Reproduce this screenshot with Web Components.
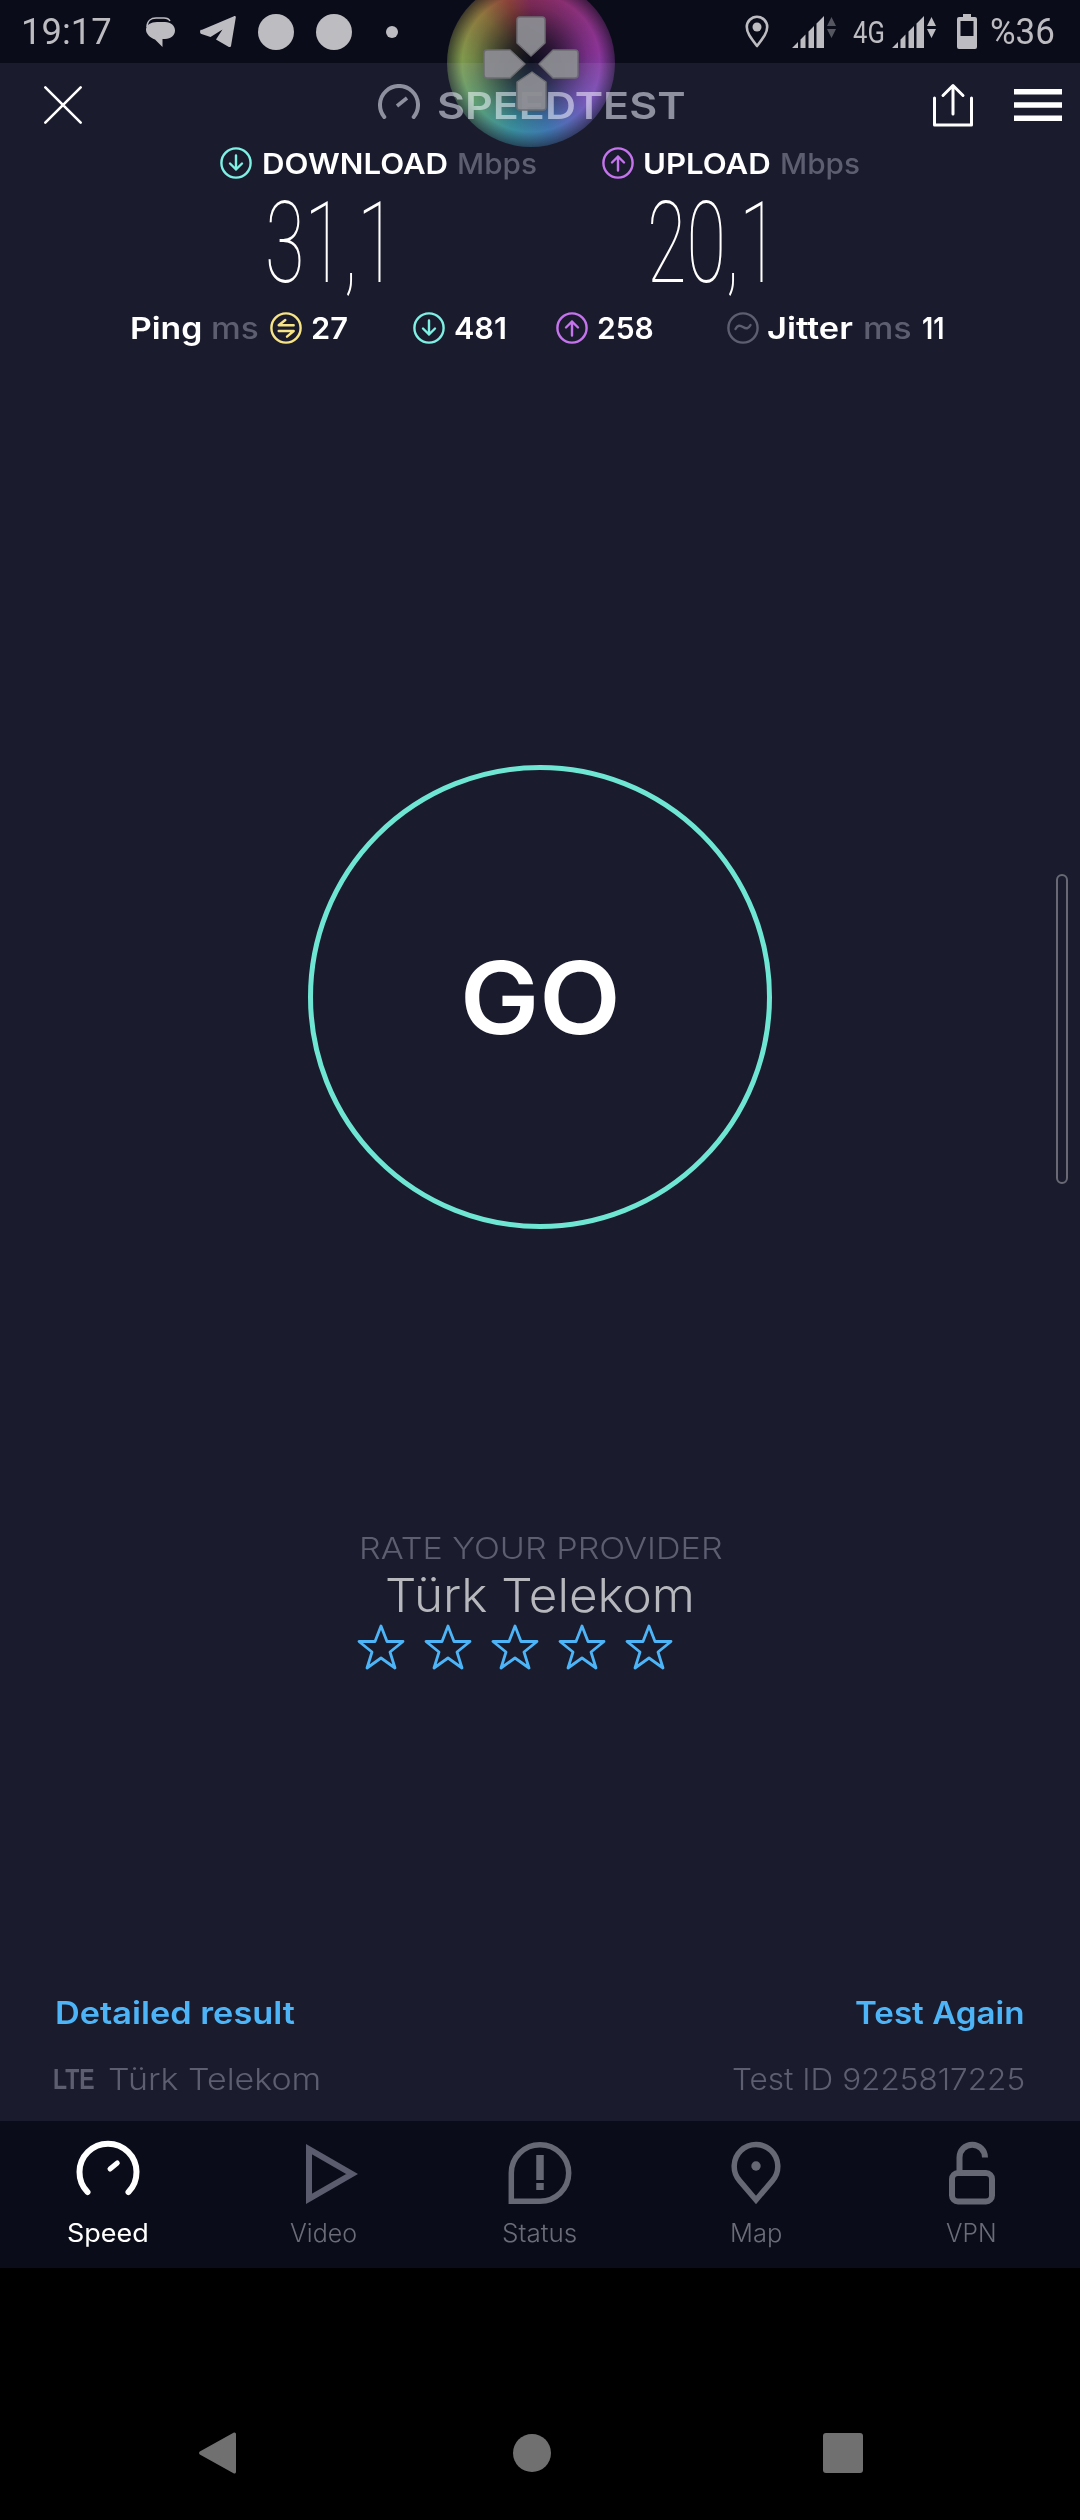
<!DOCTYPE html>
<html>
<head>
<meta charset="utf-8">
<title>Speedtest</title>
<style>
  html, body { margin: 0; padding: 0; background: #000; }
  body { width: 1080px; height: 2520px; overflow: hidden; font-family: Inter, "Liberation Sans", sans-serif; }
  speed-app { display: flex; }
</style>
</head>
<body>
<speed-app>
  <status-bar slot="status"></status-bar>
  <top-bar slot="top"></top-bar>
  <result-summary slot="top"></result-summary>
  <go-button slot="main"></go-button>
  <rate-provider slot="main"></rate-provider>
  <result-footer slot="bottom"></result-footer>
  <tab-bar slot="bottom">
    <tab-item label="Speed" icon="speed" w="82" active></tab-item>
    <tab-item label="Video" icon="video" w="67"></tab-item>
    <tab-item label="Status" icon="status" w="75"></tab-item>
    <tab-item label="Map" icon="map" w="52"></tab-item>
    <tab-item label="VPN" icon="vpn" w="51"></tab-item>
  </tab-bar>
  <nav-bar slot="bottom"></nav-bar>
</speed-app>

<script>
function shadow(el, html) {
  el.attachShadow({ mode: 'open' });
  el.shadowRoot.innerHTML = html;
}

// small ring icon used in the result rows
function ring(color, inner) {
  return `<svg width="32" height="32" viewBox="0 0 32 32" fill="none" stroke="${color}" stroke-width="2.4" stroke-linecap="round" stroke-linejoin="round"><circle cx="16" cy="16" r="14.6"/>${inner}</svg>`;
}
const ARROW_DOWN = '<path d="M16 8.500v14M10 16.500l6 6 6-6"/>';
const ARROW_UP = '<path d="M16 23.500v-14M10 15.500l6-6 6 6"/>';
const PING = '<path d="M15.300 8 8.700 13.300h15M8.700 19h15L17 24.700"/>';
const WAVE = '<path d="M8.500 17c2-4 4.500-4 7.500-2s5.500 2 7.500-2"/>';

// the screenshot font is wider than any installed one, so each text is stretched to its width
class FitText extends HTMLElement {
  constructor() {
    super();
    shadow(this, `
      <style>
        :host { display: inline-block; white-space: nowrap; flex: none; }
        span { display: inline-block; transform-origin: left center; }
      </style>
      <span><slot></slot></span>
    `);
  }
  connectedCallback() {
    const w = Number(this.getAttribute('w'));
    const span = this.shadowRoot.querySelector('span');
    const natural = span.offsetWidth;
    this.style.width = w + 'px';
    if (natural > 0) span.style.transform = `scaleX(${w / natural})`;
  }
}

class SpeedApp extends HTMLElement {
  constructor() {
    super();
    shadow(this, `
      <style>
        :host { display: flex; flex-direction: column; width: 1080px; height: 2520px; background: #1a1c2e; position: relative; overflow: hidden; }
        .top { display: block; flex: none; }
        .main { flex: 1; display: flex; flex-direction: column; align-items: center; }
        .bottom { display: block; flex: none; }
        .scroll { position: absolute; left: 1056px; top: 874px; width: 12px; height: 310px; box-sizing: border-box; border: 2.500px solid #686974; border-radius: 6px; }
        .bubble { position: absolute; left: 447px; top: -21px; width: 168px; height: 168px; border-radius: 50%; mix-blend-mode: screen;
          background:
            radial-gradient(circle closest-side, #000 0%, rgba(0,0,0,.75) 30%, rgba(0,0,0,.15) 68%, rgba(0,0,0,0) 82%, rgba(0,0,0,.6) 100%),
            conic-gradient(#84224a, #862a8c 80deg, #6a45b0 125deg, #2a66a0 165deg, #22808a 195deg, #4f9455 235deg, #7c9438 275deg, #8a7028 315deg, #8a3a24 340deg, #84224a); }
        .pad { position: absolute; left: 447px; top: -21px; width: 168px; height: 168px; }
      </style>
      <slot name="status"></slot>
      <div class="top"><slot name="top"></slot></div>
      <div class="main"><slot name="main"></slot></div>
      <div class="bottom"><slot name="bottom"></slot></div>
      <div class="scroll"></div>
      <div class="bubble"></div>
      <svg class="pad" viewBox="0 0 168 168" fill="#8c8c92" stroke="#6c6c72" stroke-width="1.500" stroke-linejoin="round" fill-opacity=".95">
        <path d="M73 38h22a3 3 0 0 1 3 3v23L84 77 70 64V41a3 3 0 0 1 3-3z"/>
        <path d="M40 71h23l15 14-15 14H40a3 3 0 0 1-3-3V74a3 3 0 0 1 3-3z"/>
        <path d="M106 71h22a3 3 0 0 1 3 3v22a3 3 0 0 1-3 3h-22L92 85z"/>
        <path d="M85 93l14 10v25a3 3 0 0 1-3 3H73a3 3 0 0 1-3-3v-25z"/>
      </svg>
    `);
  }
}

class StatusBar extends HTMLElement {
  constructor() {
    super();
    const bars = '<path d="M0 33l6-6v6zM8.500 33v-8.500l5-5V33zM16.500 33V16.500L22 11v22zM24.500 33V8.500L32 1v32z"/>';
    shadow(this, `
      <style>
        :host { display: flex; align-items: center; height: 63px; background: #0a0c1a; color: #bdbcc1; font-family: Roboto, sans-serif; font-size: 36px; box-sizing: border-box; padding: 0 25px 0 21px; flex: none; }
        svg { display: block; flex: none; fill: #bdbcc1; }
        .left, .right { display: flex; align-items: center; }
        .right { margin-left: auto; }
        .four { font-size: 32px; }
      </style>
      <div class="left">
        <fit-text w="91">19:17</fit-text>
        <svg width="32" height="32" viewBox="0 0 32 32" style="margin-left:32px"><path d="M3 11C3 5 7 2 12 2h8c3 0 5 1 6 3" fill="none" stroke="#bdbcc1" stroke-width="1.500"/><path d="M13 6h8c6 0 10 4 10 8.500S27 23 21 23h-2.500v8L11 23.500C6 21.500 2 18 2 13.500 2 9 7 6 13 6z"/></svg>
        <svg width="36" height="33" viewBox="0 0 36 33" style="margin-left:24px"><path d="M1.500 15 34 1.200c1-.400 2 .300 1.800 1.300L31 31c-.200 1-1.200 1.400-2.100.900L16 24.500l6.500-10-12 7.500-9-3c-1.600-.600-2-3-.500-4.500z"/></svg>
        <svg width="36" height="36" style="margin-left:22px"><circle cx="18" cy="18" r="18"/></svg>
        <svg width="36" height="36" style="margin-left:22px"><circle cx="18" cy="18" r="18"/></svg>
        <svg width="12" height="12" style="margin-left:34px"><circle cx="6" cy="6" r="6"/></svg>
      </div>
      <div class="right">
        <svg width="24" height="34" viewBox="0 0 24 34" fill="none"><path d="M12 31C5 22 1.800 17.500 1.800 12a10.200 10.200 0 0 1 20.400 0c0 5.500-3.200 10-10.200 19z" stroke="#bdbcc1" stroke-width="2.600" stroke-linejoin="round" fill="none"/><circle cx="12" cy="12" r="4.500"/></svg>
        <svg width="44" height="34" viewBox="0 0 44 34" style="margin-left:23px">${bars}<path d="M35 11l4.500-9 4.500 9zM35 14l4.500 9 4.500-9z" fill="#55565f"/></svg>
        <fit-text class="four" w="32" style="margin-left:17px">4G</fit-text>
        <svg width="44" height="34" viewBox="0 0 44 34" style="margin-left:7px">${bars}<path d="M35 11l4.500-9 4.500 9zM35 14l4.500 9 4.500-9z"/></svg>
        <svg width="20" height="35" viewBox="0 0 20 35" style="margin-left:21px"><path d="M6 0h8v3h4a2 2 0 0 1 2 2v28a2 2 0 0 1-2 2H2a2 2 0 0 1-2-2V5a2 2 0 0 1 2-2h4z"/><rect x="3.500" y="7" width="13" height="15" fill="#0a0c1a"/></svg>
        <fit-text w="65" style="margin-left:13px">%36</fit-text>
      </div>
    `);
  }
}

class TopBar extends HTMLElement {
  constructor() {
    super();
    shadow(this, `
      <style>
        :host { display: flex; align-items: center; height: 84px; padding: 0 18px 0 43px; color: #8e8f9f; }
        .title { display: flex; align-items: center; margin-left: 295px; font-family: Inter, sans-serif; font-weight: 600; font-size: 37px; }
        .title svg { margin-right: 17px; margin-bottom: 7px; }
        .right { margin-left: auto; display: flex; align-items: center; gap: 40px; }
        svg { display: block; flex: none; }
      </style>
      <svg width="40" height="40" viewBox="0 0 40 40" stroke="#fff" stroke-width="2.600" stroke-linecap="round"><path d="M2.300 2.300l35.400 35.400M37.700 2.300 2.300 37.700"/></svg>
      <div class="title">
        <svg width="42" height="36" viewBox="0 0 42 36" fill="none" stroke="#8e8f9f" stroke-width="4" stroke-linecap="round"><path d="M6.300 33a19 19 0 1 1 29.400 0"/><path d="M19 22l10-8" stroke-width="3.600" stroke-linecap="butt"/></svg>
        <fit-text w="249">SPEEDTEST</fit-text>
      </div>
      <div class="right">
        <svg width="42" height="44" viewBox="0 0 42 44" fill="none" stroke="#fff" stroke-width="3" stroke-linecap="round" stroke-linejoin="round"><path d="M2.500 15v27h37V15"/><path d="M21 31V2.500M11 12.500l10-10 10 10"/></svg>
        <svg width="48" height="32" viewBox="0 0 48 32" fill="#fff"><rect width="48" height="5.500"/><rect y="13.250" width="48" height="5.500"/><rect y="26.500" width="48" height="5.500"/></svg>
      </div>
    `);
  }
}

class ResultSummary extends HTMLElement {
  constructor() {
    super();
    shadow(this, `
      <style>
        :host { display: block; color: #fff; font-family: Inter, sans-serif; height: 197px; }
        .cols { display: grid; grid-template-columns: 382px 382px; margin-left: 220px; height: 165px; }
        .head { display: flex; align-items: center; height: 32px; font-size: 29px; font-weight: 600; }
        .u { color: #5d5e70; font-weight: 500; }
        .num { font-family: Roboto, sans-serif; font-weight: 100; font-size: 114px; line-height: 100px; margin: 14px 0 0 45px; height: 100px; }
        .row { display: flex; align-items: center; height: 32px; margin-left: 130px; font-size: 30px; font-weight: 600; }
        svg { display: block; flex: none; }
      </style>
      <div class="cols">
        <div>
          <div class="head">${ring('#7ff0e4', ARROW_DOWN)}
            <fit-text w="186" style="margin-left:10px">DOWNLOAD</fit-text>
            <fit-text class="u" w="80" style="margin-left:9px">Mbps</fit-text></div>
          <div class="num"><fit-text w="132">31,1</fit-text></div>
        </div>
        <div>
          <div class="head">${ring('#c674ee', ARROW_UP)}
            <fit-text w="128" style="margin-left:9px">UPLOAD</fit-text>
            <fit-text class="u" w="80" style="margin-left:9px">Mbps</fit-text></div>
          <div class="num"><fit-text w="132">20,1</fit-text></div>
        </div>
      </div>
      <div class="row">
        <fit-text w="72">Ping</fit-text>
        <fit-text class="u" w="48" style="margin-left:9px">ms</fit-text>
        <span style="margin-left:11px">${ring('#f6e486', PING)}</span>
        <fit-text w="37" style="margin-left:9px">27</fit-text>
        <span style="margin-left:65px">${ring('#7ff0e4', ARROW_DOWN)}</span>
        <fit-text w="53" style="margin-left:9px">481</fit-text>
        <span style="margin-left:49px">${ring('#c674ee', ARROW_UP)}</span>
        <fit-text w="57" style="margin-left:9px">258</fit-text>
        <span style="margin-left:73px">${ring('#5d5e70', WAVE)}</span>
        <fit-text w="86" style="margin-left:8px">Jitter</fit-text>
        <fit-text class="u" w="49" style="margin-left:10px">ms</fit-text>
        <fit-text w="22" style="margin-left:10px">11</fit-text>
      </div>
    `);
  }
}

class GoButton extends HTMLElement {
  constructor() {
    super();
    shadow(this, `
      <style>
        :host { display: flex; align-items: center; justify-content: center; box-sizing: border-box; width: 464px; height: 464px; border: 5px solid #6fe6d4; border-radius: 50%; margin-top: 421px; color: #fff; font-family: Inter, sans-serif; font-weight: 600; font-size: 100px; flex: none; }
      </style>
      <fit-text w="161">GO</fit-text>
    `);
  }
}

class RateProvider extends HTMLElement {
  constructor() {
    super();
    const star = '<svg width="48" height="46" viewBox="0 0 48 46" fill="none" stroke="#4db5f7" stroke-width="2.800" stroke-linejoin="round"><path d="M24 2l6 15.500h16L33 28l5 16-14-10-14 10 5-16L2 17.500h16z"/></svg>';
    shadow(this, `
      <style>
        :host { display: flex; flex-direction: column; align-items: center; margin-top: 301px; font-family: Inter, sans-serif; flex: none; }
        .a { color: #5d5e70; font-size: 30px; font-weight: 300; line-height: 36px; }
        .b { color: #b7b8bd; font-size: 47px; font-weight: 300; line-height: 56px; margin-top: 1px; }
        .stars { display: flex; gap: 19px; margin: 1px 0 0 -51px; }
        svg { display: block; }
      </style>
      <fit-text class="a" w="363">RATE YOUR PROVIDER</fit-text>
      <fit-text class="b" w="310">Türk Telekom</fit-text>
      <div class="stars">${star.repeat(5)}</div>
    `);
  }
}

class ResultFooter extends HTMLElement {
  constructor() {
    super();
    shadow(this, `
      <style>
        :host { display: block; padding: 22px 55px 0; font-family: Inter, sans-serif; height: 151px; box-sizing: border-box; }
        .row { display: flex; justify-content: space-between; align-items: center; }
        .links { color: #4db5f7; font-size: 31px; font-weight: 600; height: 40px; }
        .info { color: #5d5e70; font-size: 30px; font-weight: 300; height: 40px; margin-top: 27px; }
        .lte { font-family: "Liberation Sans", sans-serif; font-weight: 700; font-size: 29px; margin-left: -2px; }
        .net { display: flex; align-items: center; }
      </style>
      <div class="row links"><fit-text w="240">Detailed result</fit-text><fit-text w="170">Test Again</fit-text></div>
      <div class="row info">
        <span class="net"><fit-text class="lte" w="42">LTE</fit-text><fit-text w="213" style="margin-left:13px">Türk Telekom</fit-text></span>
        <fit-text w="293">Test ID 9225817225</fit-text>
      </div>
    `);
  }
}

class TabBar extends HTMLElement {
  constructor() {
    super();
    shadow(this, `
      <style>
        :host { display: grid; grid-template-columns: repeat(5, 216px); margin-left: 0; padding-left: 0; height: 147px; background: #0a0c1a; box-sizing: border-box; transform: none; }
      </style>
      <slot></slot>
    `);
  }
}

const TAB_ICONS = {
  speed: '<svg width="66" height="66" viewBox="0 0 66 66" fill="none" stroke="#fff" stroke-width="6" stroke-linecap="round"><path d="M12.500 52a28.500 28.500 0 1 1 41 0"/><path d="M35 29l7.300-6" stroke-width="5"/></svg>',
  video: '<svg width="68" height="66" viewBox="0 0 68 66" fill="none" stroke="#5b5c6e" stroke-width="6"><path d="M19 9.200v49.600L62 34z"/></svg>',
  status: '<svg width="66" height="66" viewBox="0 0 66 66" fill="none" stroke="#666874"><path d="M4.300 61.300V33a28.700 28.300 0 1 1 28.700 28.300z" stroke-width="5.500"/><path d="M33 15v25M33 43v7" stroke-width="7.500"/></svg>',
  map: '<svg width="50" height="66" viewBox="0 0 50 66" fill="none" stroke="#666874" stroke-width="5.500"><path d="M25 60 8.500 40.600a21.800 21.800 0 1 1 33 0z"/><circle cx="25" cy="26" r="4.700" fill="#666874" stroke="none"/></svg>',
  vpn: '<svg width="46" height="66" viewBox="0 0 46 66" fill="none" stroke="#666874" stroke-width="6"><rect x="3" y="33" width="40" height="28.500" rx="6"/><path d="M10.500 33V17.500a12.750 12.750 0 0 1 25.500 0"/></svg>'
};

class TabItem extends HTMLElement {
  constructor() {
    super();
    const active = this.hasAttribute('active');
    shadow(this, `
      <style>
        :host { display: flex; flex-direction: column; align-items: center; margin-left: -1px; font-family: Inter, sans-serif; font-size: 25px; font-weight: ${active ? 400 : 300}; color: ${active ? '#fff' : '#6b6c78'}; }
        .ico { height: 66px; margin-top: 19px; display: flex; justify-content: center; }
        .ico svg { display: block; }
        .lab { margin-top: 12px; line-height: 30px; }
      </style>
      <div class="ico">${TAB_ICONS[this.getAttribute('icon')]}</div>
      <fit-text class="lab" w="${this.getAttribute('w')}">${this.getAttribute('label')}</fit-text>
    `);
  }
}

class NavBar extends HTMLElement {
  constructor() {
    super();
    shadow(this, `
      <style>
        :host { display: block; height: 252px; background: #000; }
        svg { display: block; }
      </style>
      <svg width="1080" height="252" fill="#707070">
        <path d="M199.800 183.500 233.500 164.700c1.300-.800 2.500 0 2.500 1.500v37.600c0 1.500-1.200 2.300-2.500 1.500L199.800 186.500c-1-.700-1-2.300 0-3z" transform="translate(0 0)"/>
        <circle cx="532" cy="185" r="19"/>
        <rect x="823" y="165" width="40" height="40" rx="3"/>
      </svg>
    `);
  }
}

customElements.define('fit-text', FitText);
customElements.define('speed-app', SpeedApp);
customElements.define('status-bar', StatusBar);
customElements.define('top-bar', TopBar);
customElements.define('result-summary', ResultSummary);
customElements.define('go-button', GoButton);
customElements.define('rate-provider', RateProvider);
customElements.define('result-footer', ResultFooter);
customElements.define('tab-bar', TabBar);
customElements.define('tab-item', TabItem);
customElements.define('nav-bar', NavBar);
</script>
</body>
</html>
